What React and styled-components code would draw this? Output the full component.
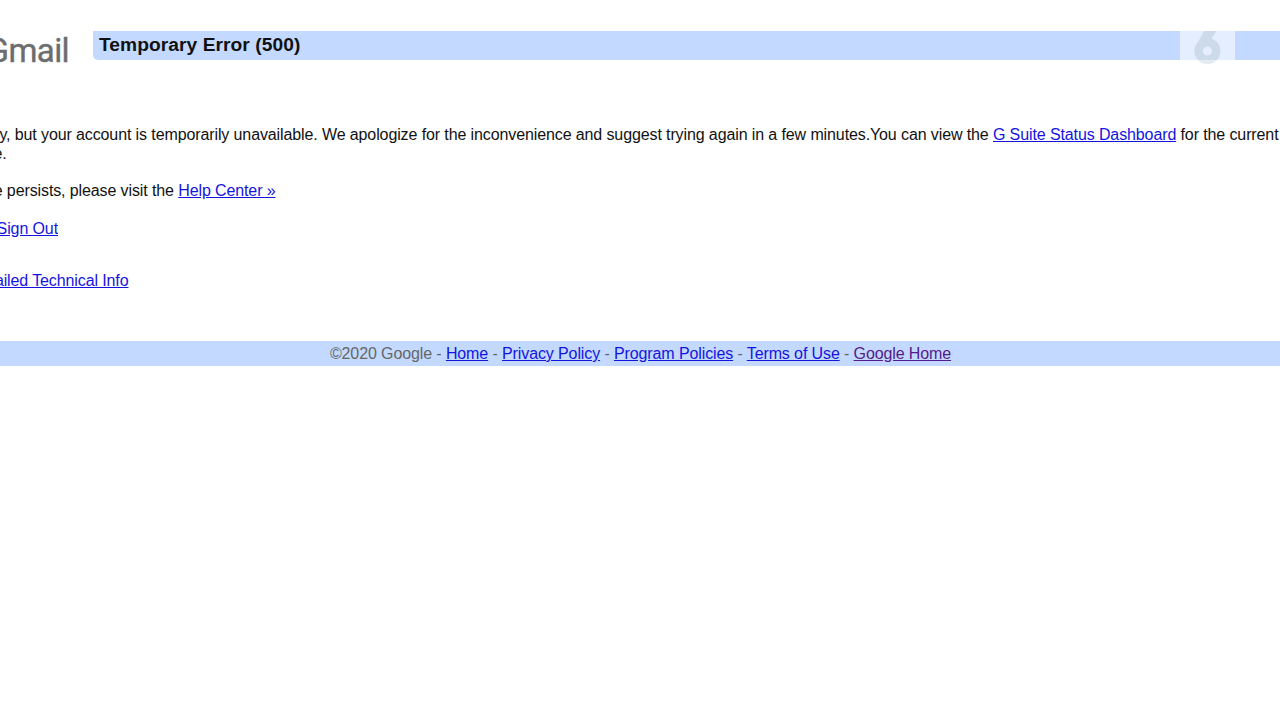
import React from 'react';
import styled, { createGlobalStyle } from 'styled-components';

const GlobalStyle = createGlobalStyle`
  body {
    margin: 0;
    background: #fff;
    overflow: hidden;
    font-family: "Liberation Sans", Arial, sans-serif;
    font-size: 16px;
    line-height: 19px;
    letter-spacing: -0.11px;
    color: #111;
  }
`;

const Page = styled.div`
  width: 100%;
  height: 720px;
  overflow: hidden;
`;

const Header = styled.header`
  display: flex;
  align-items: flex-start;
  height: 94px;
  padding-top: 31px;
`;

/* the page is scrolled sideways, so content is cut at the left edge */
const LogoClip = styled.div`
  display: flex;
  justify-content: flex-end;
  width: 69px;
  margin-right: 24px;
  overflow: hidden;
`;

const Logo = styled.div`
  font-family: Roboto, sans-serif;
  font-size: 33px;
  font-weight: 400;
  line-height: 40px;
  letter-spacing: -0.6px;
  color: #6c6d6f;
  -webkit-text-stroke: 0.4px #6c6d6f;
`;

const TitleBar = styled.div`
  display: flex;
  justify-content: space-between;
  flex: 1;
  height: 29px;
  padding: 0 45px 0 6px;
  background: #c3d9ff;
  border-bottom-left-radius: 5px;
`;

const Title = styled.h1`
  margin: 0;
  font-size: 19.2px;
  line-height: 28px;
  font-weight: bold;
  letter-spacing: 0.06px;
`;

const Watermark = styled.div`
  display: flex;
  justify-content: center;
  width: 55px;
  height: 29px;
  background: #e5eeff;
`;

const Row = styled.div`
  display: flex;
  justify-content: flex-end;
  width: ${props => props.$end}px;
  margin-bottom: ${props => props.$gap || 0}px;
  overflow: hidden;
  white-space: pre;
`;

const StyledLink = styled.a`
  color: ${props => (props.$visited ? '#551a8b' : '#1414e0')};
  text-decoration: underline;
`;

const Footer = styled.footer`
  height: 25px;
  padding-left: 1px;
  background: #c3d9ff;
  line-height: 25px;
  text-align: center;
  color: #666;
`;

const Mark = styled.svg`
  flex: none;
  width: 29px;
  height: 34px;
`;

const SixMark = () => (
  <Mark viewBox="0 0 29 34">
    <path fill="#cddaea" d="M11 0H23.5L18 8L3.6 13.5Z" />
    <circle cx="14.4" cy="20" r="8.8" fill="none" stroke="#cddaea" strokeWidth="8.6" />
    <rect y="29" width="29" height="5" fill="#fff" opacity="0.45" />
  </Mark>
);

const links = [
  { text: 'Home' },
  { text: 'Privacy Policy' },
  { text: 'Program Policies' },
  { text: 'Terms of Use' },
  { text: 'Google Home', visited: true },
];

const App = () => (
  <>
    <GlobalStyle />
    <Page>
      <Header>
        <LogoClip><Logo>Gmail</Logo></LogoClip>
        <TitleBar>
          <Title>Temporary Error (500)</Title>
          <Watermark><SixMark /></Watermark>
        </TitleBar>
      </Header>
      <Row $end={1278.5}>
        <span>y, but your account is temporarily unavailable. We apologize for the inconvenience and suggest trying again in a few minutes.You can view the </span>
        <StyledLink>G Suite Status Dashboard</StyledLink>
        <span> for the current</span>
      </Row>
      <Row $end={6.5} $gap={18}>e.</Row>
      <Row $end={275.5} $gap={19}>
        <span>e persists, please visit the </span>
        <StyledLink>Help Center »</StyledLink>
      </Row>
      <Row $end={58} $gap={33}><StyledLink>Sign Out</StyledLink></Row>
      <Row $end={128.5} $gap={51}><StyledLink>ailed Technical Info</StyledLink></Row>
      <Footer>
        ©2020 Google
        {links.map(link => (
          <React.Fragment key={link.text}>
            {' - '}
            <StyledLink $visited={link.visited}>{link.text}</StyledLink>
          </React.Fragment>
        ))}
      </Footer>
    </Page>
  </>
);

export default App;
